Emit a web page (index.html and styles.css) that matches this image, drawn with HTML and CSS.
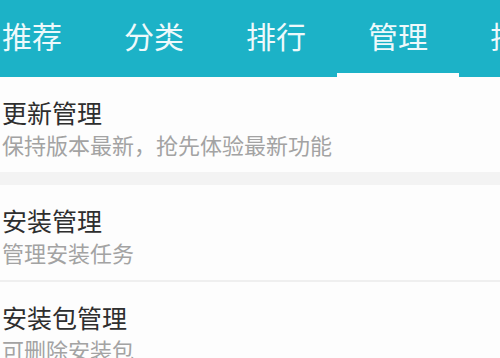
FILE: index.html
```html
<!DOCTYPE html>
<html lang="zh-CN">
<head>
<meta charset="utf-8">
<title>管理</title>
<link rel="stylesheet" href="styles.css">
</head>
<body>
<nav class="tabbar">
  <div class="tabs">
    <div class="tab">推荐</div>
    <div class="tab">分类</div>
    <div class="tab">排行</div>
    <div class="tab active">管理</div>
    <div class="tab">排行</div>
  </div>
</nav>
<main class="list">
  <section class="item">
    <div class="title">更新管理</div>
    <div class="sub">保持版本最新，抢先体验最新功能</div>
  </section>
  <div class="band"></div>
  <section class="item divided">
    <div class="title">安装管理</div>
    <div class="sub">管理安装任务</div>
  </section>
  <section class="item">
    <div class="title">安装包管理</div>
    <div class="sub">可删除安装包</div>
  </section>
</main>
</body>
</html>
```
FILE: styles.css
```css
html, body {
  margin: 0;
  padding: 0;
  background: #fdfdfd;
  font-family: "Noto Sans CJK SC", "Noto Sans", sans-serif;
  overflow: hidden;
  width: 500px;
  height: 358px;
}
.tabbar {
  background: #1cb2c7;
  height: 77px;
  overflow: hidden;
}
.tabs {
  display: flex;
  margin-left: -29px;
  height: 77px;
}
.tab {
  flex: 0 0 122px;
  box-sizing: border-box;
  height: 77px;
  padding-top: 19px;
  text-align: center;
  color: #eef9fb;
  font-size: 30px;
  line-height: 32px;
  white-space: nowrap;
}
.tab.active {
  border-bottom: 4px solid #fdfdfd;
}
.list {
  display: flex;
  flex-direction: column;
}
.item {
  padding: 22px 0 17px 2px;
  background: #fdfdfd;
}
.item.divided {
  border-bottom: 2px solid #efefef;
}
.title {
  font-size: 25px;
  line-height: 26px;
  color: #2e2e2e;
  margin-bottom: 8px;
}
.sub {
  font-size: 22px;
  line-height: 22px;
  color: #a3a3a3;
}
.band {
  height: 13px;
  background: #f3f3f3;
}
```
